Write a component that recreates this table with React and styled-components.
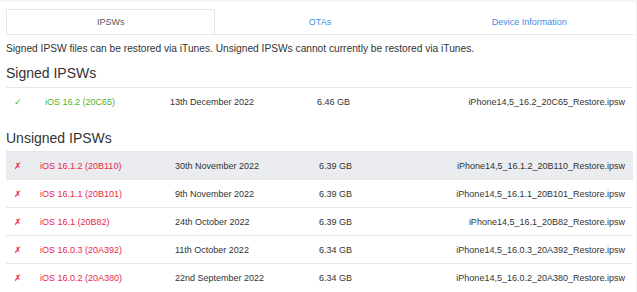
import React from "react";
import styled, { createGlobalStyle } from "styled-components";

const Global = createGlobalStyle`
  html, body { margin: 0; padding: 0; background: #fff; }
  body { font-family: "Liberation Sans", Arial, Helvetica, sans-serif; color: #333; }
  * { box-sizing: border-box; }
`;

const Page = styled.div`
  border-top: 2px solid #f6f6f6;
  padding: 0 3px 0 6px;
  min-height: 292px;
  border-right: 1px solid #f3f3f3;
  width: 637px;
`;

const Tabs = styled.nav`
  display: grid;
  grid-template-columns: repeat(3, 1fr);
  margin-top: 7px;
  border-bottom: 1px solid #e8e8e8;
  margin-right: -1px;
`;

const Tab = styled.div`
  height: 25px;
  line-height: 24px;
  text-align: center;
  font-size: 9px;
  color: ${(p) => (p.$active ? "#555" : "#3a8ee6")};
  border: 1px solid ${(p) => (p.$active ? "#e8e8e8" : "transparent")};
  border-bottom: none;
  margin-bottom: ${(p) => (p.$active ? "-1px" : "0")};
  background: #fff;
`;

const Note = styled.p`
  margin: 7px 0 0;
  font-size: 10.2px;
  line-height: 14px;
  color: #333;
`;

const Heading = styled.h2`
  margin: ${(p) => p.$mt}px 0 ${(p) => p.$mb}px;
  font-size: 14px;
  line-height: 17px;
  font-weight: 400;
  color: #333;
`;

const Table = styled.div`
  display: flex;
  flex-direction: column;
`;

const Row = styled.div`
  display: grid;
  grid-template-columns: ${(p) => p.$cols} 1fr;
  height: 28px;
  align-items: center;
  border-top: 1px solid #e6e6e6;
  background: ${(p) => (p.$shade ? "#eaecf0" : "transparent")};
  font-size: 9px;
`;

const Cell = styled.div`
  padding: 0 8px;
  white-space: nowrap;
  color: ${(p) => p.$color || "#333"};
  text-align: ${(p) => (p.$right ? "right" : "left")};
`;

const Mark = styled.span`
  font-family: "DejaVu Sans", sans-serif;
  font-size: 9px;
  color: ${(p) => p.$color};
`;

const GREEN = "#4fb22a";
const RED = "#e8294a";

const signed = [
  { v: "iOS 16.2 (20C65)", d: "13th December 2022", s: "6.46 GB", f: "iPhone14,5_16.2_20C65_Restore.ipsw" },
];

const unsigned = [
  { v: "iOS 16.1.2 (20B110)", d: "30th November 2022", s: "6.39 GB", f: "iPhone14,5_16.1.2_20B110_Restore.ipsw", shade: true },
  { v: "iOS 16.1.1 (20B101)", d: "9th November 2022", s: "6.39 GB", f: "iPhone14,5_16.1.1_20B101_Restore.ipsw" },
  { v: "iOS 16.1 (20B82)", d: "24th October 2022", s: "6.39 GB", f: "iPhone14,5_16.1_20B82_Restore.ipsw" },
  { v: "iOS 16.0.3 (20A392)", d: "11th October 2022", s: "6.34 GB", f: "iPhone14,5_16.0.3_20A392_Restore.ipsw" },
  { v: "iOS 16.0.2 (20A380)", d: "22nd September 2022", s: "6.34 GB", f: "iPhone14,5_16.0.2_20A380_Restore.ipsw" },
];

function FirmwareTable({ rows, cols, mark, color }) {
  return (
    <Table>
      {rows.map((r) => (
        <Row key={r.f} $cols={cols} $shade={r.shade}>
          <Cell><Mark $color={color}>{mark}</Mark></Cell>
          <Cell $color={color}>{r.v}</Cell>
          <Cell>{r.d}</Cell>
          <Cell>{r.s}</Cell>
          <Cell $right>{r.f}</Cell>
        </Row>
      ))}
    </Table>
  );
}

export default function App() {
  return (
    <>
      <Global />
      <Page>
        <Tabs>
          <Tab $active>IPSWs</Tab>
          <Tab>OTAs</Tab>
          <Tab>Device Information</Tab>
        </Tabs>
        <Note>Signed IPSW files can be restored via iTunes. Unsigned IPSWs cannot currently be restored via iTunes.</Note>
        <Heading $mt={9} $mb={5}>Signed IPSWs</Heading>
        <FirmwareTable rows={signed} cols="31px 125px 147px 80px" mark="✓" color={GREEN} />
        <Heading $mt={15} $mb={4}>Unsigned IPSWs</Heading>
        <FirmwareTable rows={unsigned} cols="26px 135px 144px 80px" mark="✗" color={RED} />
      </Page>
    </>
  );
}
